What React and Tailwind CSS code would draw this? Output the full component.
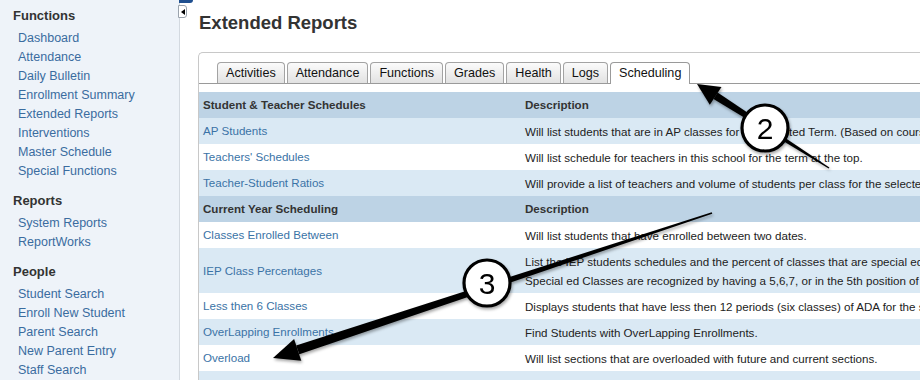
import React from "react";

const sections = [
  {
    title: "Functions",
    links: [
      "Dashboard",
      "Attendance",
      "Daily Bulletin",
      "Enrollment Summary",
      "Extended Reports",
      "Interventions",
      "Master Schedule",
      "Special Functions",
    ],
  },
  { title: "Reports", links: ["System Reports", "ReportWorks"] },
  {
    title: "People",
    links: ["Student Search", "Enroll New Student", "Parent Search", "New Parent Entry", "Staff Search"],
  },
];

const tabs = ["Activities", "Attendance", "Functions", "Grades", "Health", "Logs", "Scheduling"];

const rows = [
  { type: "head", a: "Student & Teacher Schedules", b: "Description" },
  { a: "AP Students", b: ["Will list students that are in AP classes for the selected Term. (Based on course number)"], bg: "l" },
  { a: "Teachers' Schedules", b: ["Will list schedule for teachers in this school for the term at the top."], bg: "w" },
  { a: "Teacher-Student Ratios", b: ["Will provide a list of teachers and volume of students per class for the selected term."], bg: "l" },
  { type: "head", a: "Current Year Scheduling", b: "Description" },
  { a: "Classes Enrolled Between", b: ["Will list students that have enrolled between two dates."], bg: "w" },
  {
    a: "IEP Class Percentages",
    b: [
      "List the IEP students schedules and the percent of classes that are special ed classes.",
      "Special ed Classes are recognized by having a 5,6,7, or in the 5th position of the course number.",
    ],
    bg: "l",
  },
  { a: "Less then 6 Classes", b: ["Displays students that have less then 12 periods (six classes) of ADA for the selected date."], bg: "w" },
  { a: "OverLapping Enrollments", b: ["Find Students with OverLapping Enrollments."], bg: "l" },
  { a: "Overload", b: ["Will list sections that are overloaded with future and current sections."], bg: "w" },
  { a: "ESP Report", b: ["Provides ESP report information."], bg: "l" },
];

function Arrow({ pts, head }) {
  return (
    <g>
      <polygon points={pts} fill="#000" />
      <polygon points={head} fill="#000" />
    </g>
  );
}

function Badge({ cx, cy, n }) {
  return (
    <g>
      <circle cx={cx} cy={cy} r="23" fill="#fff" stroke="#000" strokeWidth="3.2" />
      <text
        x={cx}
        y={cy + 10.5}
        textAnchor="middle"
        fontSize="30"
        fontFamily="'Liberation Sans', Arial, sans-serif"
        fill="#000"
      >
        {n}
      </text>
    </g>
  );
}

export default function App() {
  return (
    <div className="relative w-[920px] h-[380px] overflow-hidden bg-white flex font-['Liberation_Sans',Arial,sans-serif]">
      <aside className="w-[180px] shrink-0 bg-[#eef3f9] border-r border-[#d3d9e0] pl-[13px] pt-[6px] flex flex-col gap-[10px]">
        {sections.map((s) => (
          <div key={s.title}>
            <div className="text-[13px] leading-[19px] font-bold text-[#333] mb-[4px]">{s.title}</div>
            <ul className="pl-[5px]">
              {s.links.map((l) => (
                <li key={l} className="text-[12.5px] leading-[19px] text-[#3a6c9f]">
                  {l}
                </li>
              ))}
            </ul>
          </div>
        ))}
      </aside>

      <main className="flex-1 min-w-0 pl-[18px] pt-[13px]">
        <h1 className="text-[18.5px] leading-[20px] font-bold text-[#333] pl-[1px]">Extended Reports</h1>
        <div className="mt-[19px] w-[1000px] border-l border-t border-[#c8c8c8] rounded-tl-[5px]">
          <div className="flex items-end gap-[2px] pl-[18px] pt-[9px] border-b border-[#9a9a9a]">
            {tabs.map((t) =>
              t === "Scheduling" ? (
                <div
                  key={t}
                  className="relative h-[22px] -mb-px px-[8px] bg-white border border-b-0 border-[#9a9a9a] rounded-t-[4px] text-[12.6px] leading-[21px] text-[#111]"
                >
                  {t}
                </div>
              ) : (
                <div
                  key={t}
                  className="h-[21px] px-[8px] bg-gradient-to-b from-[#fbfbfb] to-[#e2e2e2] border border-b-0 border-[#a3a3a3] rounded-t-[4px] text-[12.6px] leading-[20px] text-[#111]"
                >
                  {t}
                </div>
              )
            )}
          </div>
          <div className="pt-[8px]">
            <table className="table-fixed w-[1000px] border-collapse">
              <colgroup>
                <col className="w-[322px]" />
                <col />
              </colgroup>
              <tbody>
                {rows.map((r, i) =>
                  r.type === "head" ? (
                    <tr key={i} className="h-[26px] bg-[#bdd3e5]">
                      <td className="px-[4px] text-[11.6px] font-bold text-[#333] whitespace-nowrap">{r.a}</td>
                      <td className="px-[4px] text-[11.6px] font-bold text-[#333] whitespace-nowrap">{r.b}</td>
                    </tr>
                  ) : (
                    <tr
                      key={i}
                      className={(r.b.length > 1 ? "h-[45px] " : "h-[26px] ") + (r.bg === "l" ? "bg-[#dae9f4]" : "bg-white")}
                    >
                      <td className="px-[4px] text-[11.6px] text-[#3a73a6] whitespace-nowrap">{r.a}</td>
                      <td className="px-[4px] text-[11.6px] text-[#222] whitespace-nowrap">
                        {r.b.map((line) => (
                          <div key={line} className="leading-[19px]">
                            {line}
                          </div>
                        ))}
                      </td>
                    </tr>
                  )
                )}
              </tbody>
            </table>
          </div>
        </div>
      </main>

      {/* collapse handle */}
      <div className="absolute left-[179px] top-0 w-[14px] h-[3px] bg-[#1f4f8f] rounded-br-[3px]" />
      <div className="absolute left-[178px] top-[5px] w-[9px] h-[13px] bg-white border border-[#9aa3ad] rounded-r-[3px] flex items-center justify-center">
        <div className="w-0 h-0 border-y-[3px] border-y-transparent border-r-[4px] border-r-black" />
      </div>

      {/* annotations */}
      <svg className="absolute inset-0 pointer-events-none" width="920" height="380" viewBox="0 0 920 380">
        <defs>
          <filter id="sh" x="-10%" y="-10%" width="120%" height="120%">
            <feDropShadow dx="1" dy="2" stdDeviation="1.5" floodColor="#000" floodOpacity="0.35" />
          </filter>
        </defs>
        <g filter="url(#sh)">
          <Arrow
            pts="717.6,92.6 713.5,99.0 828.62,168.59 829.38,167.41"
            head="697,84 721.5,87.0 709.8,104.8"
          />
          <Arrow
            pts="299.3,354.3 296.1,345.4 711.75,212.24 712.25,213.76"
            head="273,358 301.3,360.8 294.1,338.9"
          />
          <Badge cx={765} cy={128} n="2" />
          <Badge cx={487} cy={283} n="3" />
        </g>
      </svg>
    </div>
  );
}
